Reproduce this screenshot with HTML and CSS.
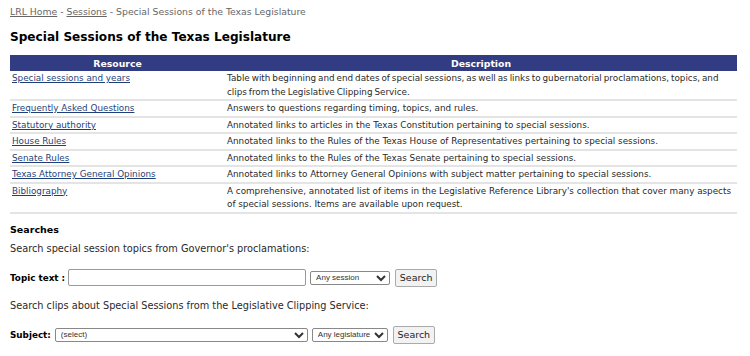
FILE: index.html
```html
<!DOCTYPE html>
<html lang="en">
<head>
    <meta charset="UTF-8">
    <title>Special Sessions of the Texas Legislature</title>
    <link rel="stylesheet" href="styles.css">
</head>
<body>
    <div class="crumbs">
        <a href="#">LRL Home</a> - <a href="#">Sessions</a> - Special Sessions of the Texas Legislature
    </div>

    <h1>Special Sessions of the Texas Legislature</h1>

    <table class="resources">
        <thead>
            <tr>
                <th class="col-res">Resource</th>
                <th>Description</th>
            </tr>
        </thead>
        <tbody>
            <tr>
                <td><a href="#">Special sessions and years</a></td>
                <td class="tight">Table with beginning and end dates of special sessions, as well as links to gubernatorial proclamations, topics, and clips from the Legislative Clipping Service.</td>
            </tr>
            <tr>
                <td><a href="#">Frequently Asked Questions</a></td>
                <td>Answers to questions regarding timing, topics, and rules.</td>
            </tr>
            <tr>
                <td><a href="#">Statutory authority</a></td>
                <td>Annotated links to articles in the Texas Constitution pertaining to special sessions.</td>
            </tr>
            <tr>
                <td><a href="#">House Rules</a></td>
                <td>Annotated links to the Rules of the Texas House of Representatives pertaining to special sessions.</td>
            </tr>
            <tr>
                <td><a href="#">Senate Rules</a></td>
                <td>Annotated links to the Rules of the Texas Senate pertaining to special sessions.</td>
            </tr>
            <tr>
                <td><a href="#">Texas Attorney General Opinions</a></td>
                <td>Annotated links to Attorney General Opinions with subject matter pertaining to special sessions.</td>
            </tr>
            <tr>
                <td><a href="#">Bibliography</a></td>
                <td>A comprehensive, annotated list of items in the Legislative Reference Library's collection that cover many aspects of special sessions. Items are available upon request.</td>
            </tr>
        </tbody>
    </table>

    <h2>Searches</h2>
    <p class="intro">Search special session topics from Governor's proclamations:</p>
    <form class="search-row first">
        <label for="topic">Topic text :</label>
        <input type="text" id="topic" name="topic">
        <select name="session" class="sel-session">
            <option>Any session</option>
        </select>
        <button type="submit">Search</button>
    </form>

    <p class="intro second">Search clips about Special Sessions from the Legislative Clipping Service:</p>
    <form class="search-row">
        <label for="subject">Subject:</label>
        <select id="subject" name="subject" class="sel-subject">
            <option>(select)</option>
        </select>
        <select name="legislature" class="sel-leg">
            <option>Any legislature</option>
        </select>
        <button type="submit">Search</button>
    </form>
</body>
</html>
```

FILE: styles.css
```css
body {
    font-family: "DejaVu Sans", Verdana, sans-serif;
    font-size: 9.3px;
    color: #2a2a2a;
    margin: 5px 10px;
}
a {
    color: #1f3f7a;
}
.crumbs {
    color: #666;
    line-height: 13px;
}
.crumbs a {
    color: #666;
}
h1 {
    font-size: 12.1px;
    line-height: 15px;
    margin: 12px 0 10px;
    color: #000;
}
h2 {
    font-size: 9.5px;
    line-height: 13px;
    margin: 9px 0 6px;
    color: #000;
}
.intro {
    font-size: 9.75px;
    margin: 0 0 14px;
    line-height: 13px;
}
.intro.second {
    margin-bottom: 14px;
}
.resources {
    width: 727px;
    border-collapse: collapse;
    table-layout: fixed;
}
.resources th {
    background-color: #323c82;
    color: #fff;
    padding: 2px 2px 1px;
    line-height: 13px;
}
.resources th.col-res {
    width: 211px;
}
.resources td {
    vertical-align: top;
    padding: 1px 0 0 2px;
    font-size: 8.8px;
    line-height: 13.5px;
    border-bottom: 2px solid #e4e4e4;
}
.resources td.tight {
    word-spacing: -0.85px;
}
.search-row {
    display: flex;
    align-items: center;
    gap: 3px;
    height: 18px;
    margin: 0 0 12px;
}
.search-row label {
    font-weight: bold;
    font-size: 8.8px;
    color: #000;
}
.search-row input[type="text"] {
    box-sizing: border-box;
    width: 238px;
    height: 17px;
    border: 1px solid #999;
    border-radius: 2px;
    font-size: 9px;
}
select {
    box-sizing: border-box;
    font-family: "Liberation Sans", Arial, sans-serif;
    font-size: 8px;
    height: 14px;
    padding: 0 1px;
    border: 1px solid #888;
    border-radius: 2px;
    background: #fff;
    color: #333;
    margin-left: 1px;
}
.sel-session {
    width: 80px;
}
.sel-subject {
    width: 253px;
}
.sel-leg {
    width: 76px;
}
button {
    box-sizing: border-box;
    font-family: "DejaVu Sans", Verdana, sans-serif;
    font-size: 9.5px;
    height: 18px;
    width: 42px;
    padding: 0;
    margin-left: 2px;
    border: 1px solid #aaa;
    border-radius: 2px;
    background: #f2f2f2;
    color: #222;
}
```
